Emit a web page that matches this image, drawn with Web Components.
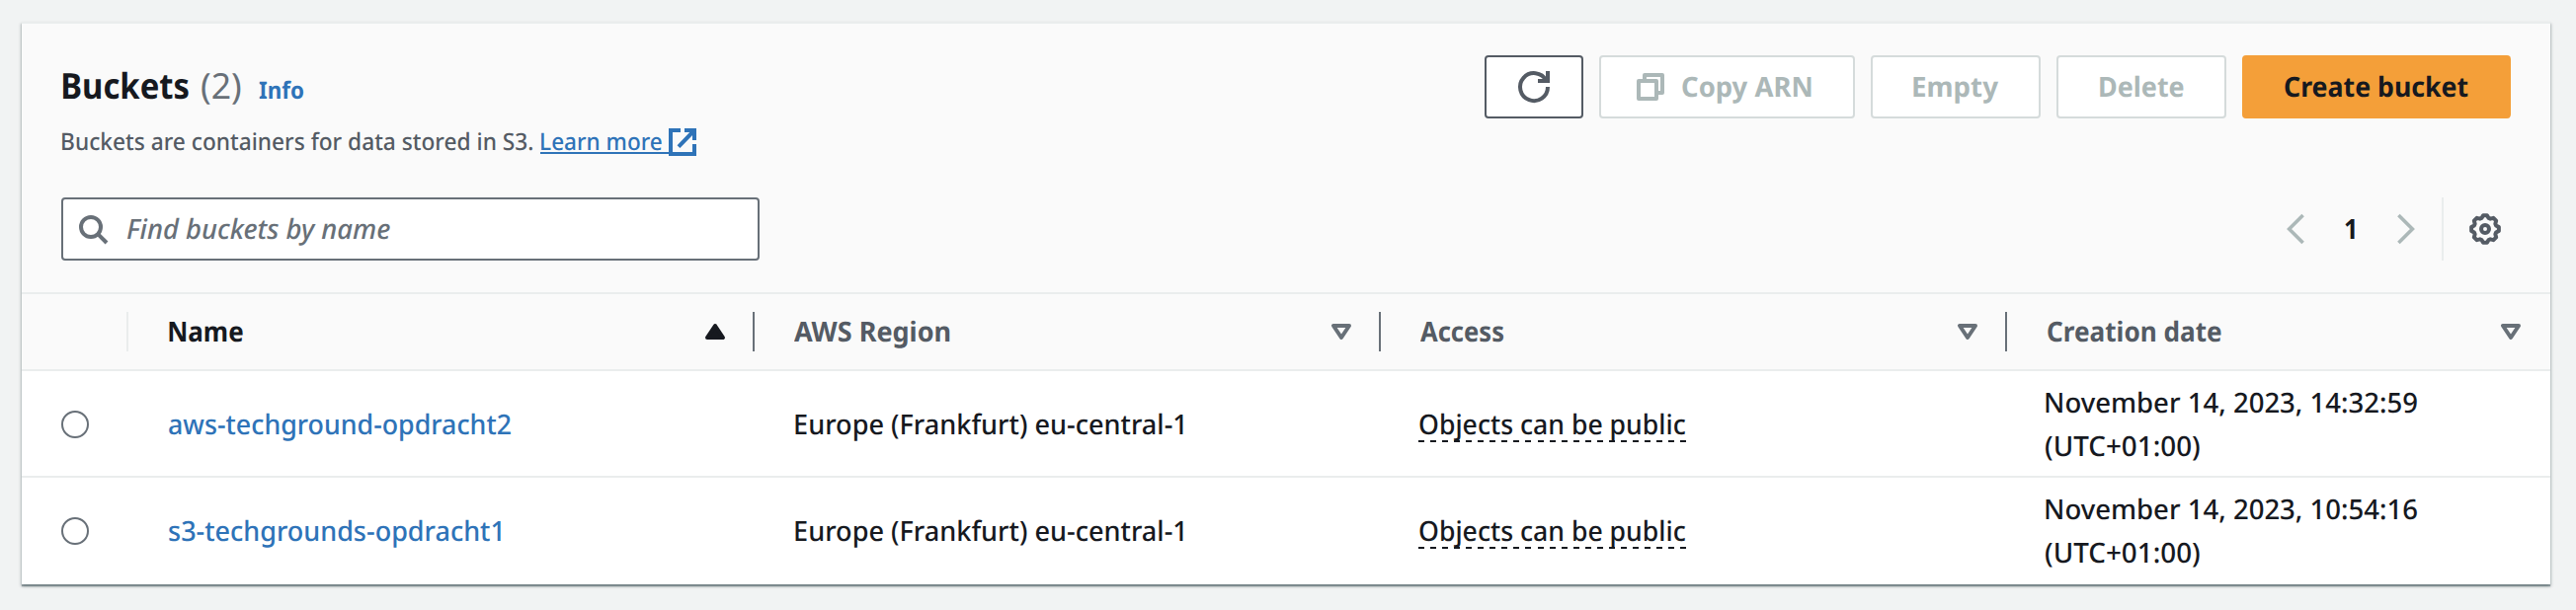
<!DOCTYPE html>
<html lang="en">
<head>
<meta charset="utf-8">
<title>Buckets</title>
<style>
html,body{background:#f1f3f3}
body{margin:0;display:flow-root;height:618px;font-family:"Noto Sans","Open Sans",sans-serif;color:#16191f;font-size:28px;font-weight:500;text-rendering:geometricPrecision}
</style>
</head>
<body>
<bucket-panel></bucket-panel>
<script>
const define = (name, html, init) => customElements.define(name, class extends HTMLElement {
  connectedCallback() {
    if (this.shadowRoot) return;
    this.attachShadow({mode: 'open'}).innerHTML = html;
    if (init) init(this, this.shadowRoot);
  }
});

/* Text label whose glyphs are condensed to fill the given width. */
define('fit-text', `<style>
:host{display:inline-block;white-space:pre;line-height:40px;flex:none}
span{display:block;transform-origin:0 50%;width:max-content}
</style><span><slot></slot></span>`, (el, root) => {
  const w = +el.getAttribute('w');
  const cs = getComputedStyle(el);
  const ctx = document.createElement('canvas').getContext('2d');
  ctx.font = `${cs.fontStyle} ${cs.fontWeight} ${cs.fontSize} ${cs.fontFamily}`;
  const m = ctx.measureText(el.textContent);
  const span = root.querySelector('span');
  const advance = span.getBoundingClientRect().width;
  const left = -m.actualBoundingBoxLeft;
  const right = m.width - m.actualBoundingBoxRight;
  const s = w / (advance - left - right);
  el.style.width = w + 'px';
  span.style.transform = `translateX(${-left * s}px) scaleX(${s})`;
});

const gearPath = () => {
  const pts = [];
  const at = (r, deg) => {
    const a = deg * Math.PI / 180;
    pts.push((8 + r * Math.sin(a)).toFixed(2) + ' ' + (8 - r * Math.cos(a)).toFixed(2));
  };
  for (let d = 0; d < 360; d += 45) { at(7, d - 8); at(7, d + 8); at(5.8, d + 18); at(5.8, d + 27); }
  return 'M' + pts.join('L') + 'z';
};
const icons = {
  refresh: '<path d="M10 5h5V0M15 8a7 7 0 1 1-.8-3.2"/>',
  copy: '<path stroke-linejoin="round" d="M2 5h9v9H2zM5 4V2h9v9h-2"/>',
  external: '<path d="M9 2h5v5M14 2 6 10.3M14 9v5H2V2h5" />',
  search: '<circle cx="7" cy="7" r="5"/><path d="m10.8 10.8 4.2 4.2"/>',
  prev: '<path stroke-width="1.8" d="M11.8 1 4.8 8l7 7"/>',
  next: '<path stroke-width="1.8" d="m4.2 1 7 7-7 7"/>',
  gear: `<path stroke-linejoin="round" d="${gearPath()}"/><circle cx="8" cy="8" r="2"/>`,
  asc: '<path fill="currentColor" stroke-linejoin="round" d="M8 5 12 11H4z"/>',
  sort: '<path stroke-linejoin="round" d="M4 5h8l-4 6z"/>'
};
define('ui-icon', `<style>
:host{display:block;width:32px;height:32px;flex:none}
svg{display:block;width:100%;height:100%;fill:none;stroke:currentColor;stroke-width:2;overflow:visible}
</style><svg viewBox="0 0 16 16"></svg>`, (el, root) => {
  root.querySelector('svg').innerHTML = icons[el.getAttribute('name')];
});

define('ui-button', `<style>
:host{display:flex;box-sizing:border-box;height:64px;align-items:center;justify-content:center;gap:16px;border:2px solid #545b64;border-radius:4px;background:#fff;color:#545b64;font-weight:700}
:host([disabled]){border-color:#d5dbdb;color:#acb8b8}
:host([primary]){border-color:#f49f39;background:#f49f39;color:#16191f}
</style><slot></slot>`, el => { el.style.width = el.getAttribute('w') + 'px'; });

define('panel-header', `<style>
:host{display:flex;justify-content:space-between;height:136px;padding:32px 40px 0;box-sizing:border-box}
.title{display:flex;align-items:baseline;padding-left:2px;height:54px;margin-top:4px}
.title fit-text{line-height:54px}
.h{font-size:36px;font-weight:700;margin-right:13px}
.n{font-size:36px;font-weight:400;color:#687078;margin-right:18px}
.i{font-size:24px;font-weight:700;color:#2e73b8}
.desc{display:flex;font-size:24px;color:#545b64;margin-top:9px;padding-left:1px}
.desc fit-text{line-height:42px}
.link{display:flex;color:#2e73b8;margin-left:8px}
.u{border-bottom:2px solid;height:33px;width:130px;padding-left:1px;box-sizing:border-box;white-space:nowrap}
.link ui-icon{margin:5px 0 0 -2px}
.actions{display:flex;gap:16px}
.copy{padding-right:9px}
</style>
<div>
 <div class="title"><fit-text class="h" w="127">Buckets</fit-text><fit-text class="n" w="40">(2)</fit-text><fit-text class="i" w="45">Info</fit-text></div>
 <div class="desc"><fit-text w="476">Buckets are containers for data stored in S3.</fit-text><div class="link"><div class="u"><fit-text w="122">Learn more</fit-text></div><ui-icon name="external"></ui-icon></div></div>
</div>
<div class="actions">
 <ui-button w="100"><ui-icon name="refresh"></ui-icon></ui-button>
 <ui-button class="copy" w="259" disabled><ui-icon name="copy"></ui-icon><fit-text w="131">Copy ARN</fit-text></ui-button>
 <ui-button w="172" disabled><fit-text w="86">Empty</fit-text></ui-button>
 <ui-button w="172" disabled><fit-text w="85">Delete</fit-text></ui-button>
 <ui-button w="272" primary><fit-text w="186">Create bucket</fit-text></ui-button>
</div>`);

define('search-box', `<style>
:host{display:flex;box-sizing:border-box;width:707px;height:64px;border:2px solid #687078;border-radius:4px;background:#fff;color:#687078;align-items:center;padding-left:14px;font-style:italic}
fit-text{margin-left:19px}
</style><ui-icon name="search"></ui-icon><fit-text w="266">Find buckets by name</fit-text>`);

define('page-controls', `<style>
:host{display:flex;align-items:center;color:#acb8b8;height:64px}
fit-text{color:#16191f;font-weight:700;margin:0 36px 0 34px}
i{width:2px;height:64px;background:#eaeded;margin:0 26px 0 20px}
.g{color:#545b64}
</style><ui-icon name="prev"></ui-icon><fit-text w="10">1</fit-text><ui-icon name="next"></ui-icon><i></i><ui-icon class="g" name="gear"></ui-icon>`);

define('tool-bar', `<style>
:host{display:flex;justify-content:space-between;height:136px;padding:40px 50px 0 40px;box-sizing:border-box}
</style><search-box></search-box><page-controls></page-controls>`);

const columns = 'grid-template-columns:108px 634px 634px 634px 550px';
define('head-cell', `<style>
:host{display:flex;align-items:center;justify-content:space-between;box-sizing:border-box;height:40px;padding:0 22px 0 40px;border-right:2px solid #687078;color:#545b64;font-weight:700}
:host([first]){border-color:#eaeded}
:host([last]){border:0;padding-right:24px}
:host([active]){color:#16191f}
ui-icon{color:#687078}
:host([active]) ui-icon{color:#16191f}
</style><slot></slot>`, (el, root) => {
  const s = el.getAttribute('sort');
  if (s) root.innerHTML += `<ui-icon name="${s}"></ui-icon>`;
});
define('table-head', `<style>
:host{display:grid;${columns};align-items:center;height:80px;box-sizing:border-box;border:solid #eaeded;border-width:2px 0}
</style>
<head-cell first></head-cell>
<head-cell active sort="asc"><fit-text w="75" style="margin-left:1px">Name</fit-text></head-cell>
<head-cell sort="sort"><fit-text w="158">AWS Region</fit-text></head-cell>
<head-cell sort="sort"><fit-text w="84">Access</fit-text></head-cell>
<head-cell last sort="sort"><fit-text w="176" style="margin-left:1px">Creation date</fit-text></head-cell>`);

define('bucket-row', `<style>
:host{display:grid;${columns};height:108px;padding-top:2px;box-sizing:border-box;align-items:center;background:#fff;border-bottom:2px solid #eaeded}
:host([last]){border-color:transparent}
.r{width:28px;height:28px;box-sizing:border-box;border:2px solid #687078;border-radius:50%;margin-left:40px}
.link{color:#2e73b8;margin-left:40.5px}
.reg{margin-left:40.5px}
.acc{margin-left:38px;width:271px;height:36px;padding-left:1px;box-sizing:border-box;background:repeating-linear-gradient(90deg,#16191f 0 6px,transparent 6px 12.05px) 0 100%/100% 2px no-repeat}
.acc fit-text{line-height:36px;display:block}
.date{display:flex;flex-direction:column;margin-left:38.5px}
.date fit-text{line-height:44px}
</style>
<div class="r"></div><div class="link"></div><div class="reg"><fit-text w="393">Europe (Frankfurt) eu-central-1</fit-text></div>
<div class="acc"><fit-text w="269">Objects can be public</fit-text></div><div class="date"></div>`, (el, root) => {
  const a = n => el.getAttribute(n);
  root.querySelector('.link').innerHTML = `<fit-text w="${a('w')}">${a('name')}</fit-text>`;
  root.querySelector('.date').innerHTML = `<fit-text w="376">${a('date')}</fit-text><fit-text w="156">(UTC+01:00)</fit-text>`;
});

define('bucket-panel', `<style>
:host{display:block;box-sizing:border-box;width:2560px;height:570px;margin:22px 0 0 22px;border-top:2px solid #eaeded;background:#fafafa;box-shadow:0 2px 1px rgba(0,28,36,.3),1px 2px 3px rgba(0,28,36,.2),-1px 2px 3px rgba(0,28,36,.2)}
</style>
<panel-header></panel-header><tool-bar></tool-bar><table-head></table-head>
<bucket-row name="aws-techground-opdracht2" w="346" date="November 14, 2023, 14:32:59"></bucket-row>
<bucket-row last name="s3-techgrounds-opdracht1" w="336" date="November 14, 2023, 10:54:16"></bucket-row>`);
</script>
</body>
</html>
